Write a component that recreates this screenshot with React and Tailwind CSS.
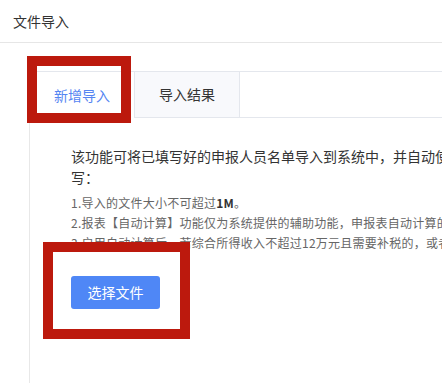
import React from 'react';

const Tabs = () => {
  return (
    <div className="flex border-t border-[#e4e7ed]">
      <div className="w-[104px] h-[46px] flex items-center justify-center text-[14px] text-[#5585f2] bg-white">
        新增导入
      </div>
      <div className="w-[106px] h-[46px] flex items-center justify-center text-[14px] text-[#333] bg-[#f8f9fc] border-x border-b border-[#e4e7ed]">
        导入结果
      </div>
      <div className="flex-1 h-[46px] border-b border-[#e4e7ed]"></div>
    </div>
  );
};

const App = () => {
  return (
    <div
      className="relative w-[442px] h-[383px] overflow-hidden bg-white flex flex-col"
      style={{ fontFamily: '"Noto Sans CJK SC", "Liberation Sans", sans-serif' }}
    >
      <div className="h-[43px] shrink-0 flex items-center px-[13px] border-b border-[#e6e6e6] text-[14px] text-[#333]">
        文件导入
      </div>

      <div className="flex-1 flex flex-col pl-[29px] pt-[28px]">
        <div className="flex-1 flex flex-col border-l border-[#e8e8e8]">
          <Tabs />

          <div className="pl-[41px] pt-[28px]">
            <div className="text-[14px] leading-[21px] text-[#333]">
              <div className="whitespace-nowrap">该功能可将已填写好的申报人员名单导入到系统中，并自动使用以下规则填</div>
              <div>写：</div>
            </div>

            <div className="mt-[5px] text-[12px] leading-[20px] tracking-[0.25px] text-[#666] whitespace-nowrap">
              <div>
                1.导入的文件大小不可超过<span className="font-bold text-[#333]">1M</span>。
              </div>
              <div>2.报表【自动计算】功能仅为系统提供的辅助功能，申报表自动计算的结果仅供参考。</div>
              <div>3.启用自动计算后，若综合所得收入不超过12万元且需要补税的，或者年度汇算</div>
            </div>

            <button className="mt-[23px] w-[89px] h-[33px] rounded-[3px] bg-[#4f87f6] text-white text-[14px]">
              选择文件
            </button>
          </div>
        </div>
      </div>

      {/* annotation boxes */}
      <div className="absolute left-[27px] top-[56px] w-[104px] h-[67px] border-[10px] border-[#bc190d]"></div>
      <div className="absolute left-[43px] top-[242px] w-[147px] h-[97px] border-[10px] border-[#bc190d]"></div>
    </div>
  );
};

export default App;
